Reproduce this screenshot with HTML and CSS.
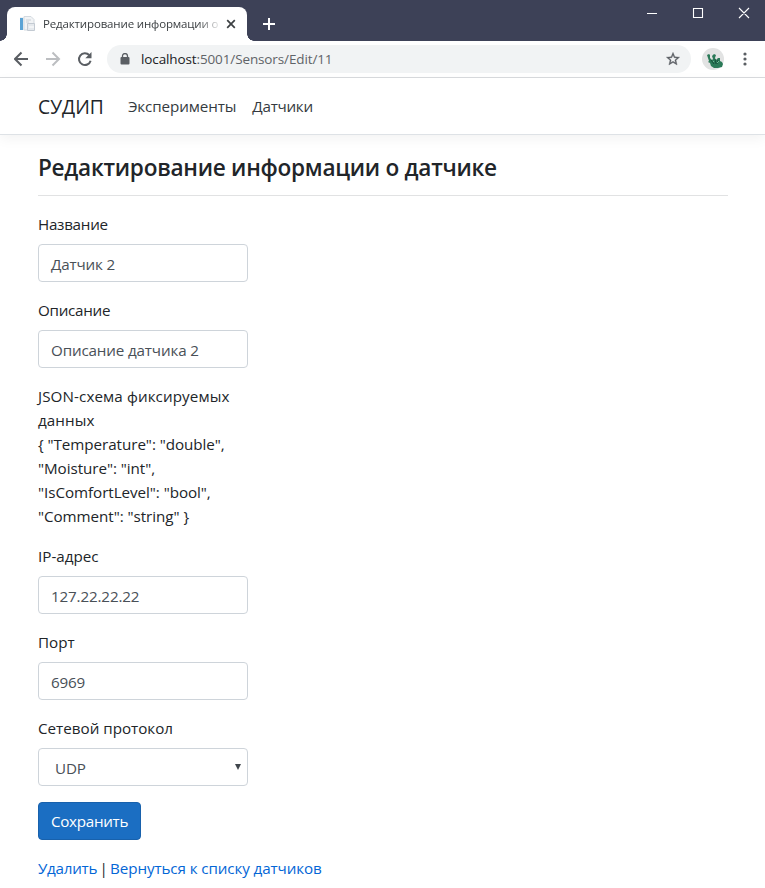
FILE: index.html
```html
<!DOCTYPE html>
<html lang="ru">
<head>
<meta charset="utf-8">
<title>Редактирование информации о датчике</title>
<link rel="stylesheet" href="styles.css">
</head>
<body>
<div class="titlebar">
  <div class="tab">
    <svg class="favicon" width="18" height="18" viewBox="0 0 18 18">
      <path d="M1 2h12v13H1z" fill="#eef1f4"/>
      <path d="M1 3h3v12H1z" fill="#5ba3d5"/>
      <path d="M5 1.500h7l3 3V15H5z" fill="#f1f3f5" stroke="#d3d9df"/>
      <path d="M7 5h5M7 7h3" stroke="#cbd1d8"/>
      <path d="M8.500 8.500h7v7h-7z" fill="#e5e9ed" stroke="#c3cad2"/>
      <path d="M10 12h5" stroke="#fff"/>
    </svg>
    <span class="tab-title">Редактирование информации о</span>
    <svg class="tab-close" width="10" height="10" viewBox="0 0 10 10"><path d="M1.200 1.200l7.600 7.600M8.800 1.200L1.200 8.800" stroke="#3c4043" stroke-width="1.700"/></svg>
  </div>
  <svg class="newtab" width="12" height="12" viewBox="0 0 12 12"><path d="M6 0v12M0 6h12" stroke="#fff" stroke-width="2"/></svg>
  <svg class="window-buttons" width="104" height="12" viewBox="0 0 104 12"><path d="M0 6.500h10M46.500 1.500h9v9h-9zM92 1l10 10M102 1L92 11" fill="none" stroke="#fff" stroke-width="1.100"/></svg>
</div>
<div class="toolbar">
  <svg class="nav-icons" width="80" height="16" viewBox="0 0 80 16" fill="none" stroke-width="2">
    <path d="M14 8H1.500M7.500 1.500L1 8l6.500 6.500" stroke="#5a5e63"/>
    <path d="M32 8h12.500M38.500 1.500L45 8l-6.500 6.500" stroke="#bcbec1"/>
    <path d="M75.300 4.200A5.900 5.900 0 1 0 76.600 9.700" stroke="#5a5e63"/>
    <path d="M77.500 1v6.200h-6.200z" fill="#5a5e63"/>
  </svg>
  <div class="address">
    <svg width="10" height="12" viewBox="0 0 10 12"><rect x="0.500" y="4" width="9" height="7.500" rx="1" fill="#5a5e63"/><path d="M2.500 5V3a2.500 2.500 0 0 1 5 0v2" fill="none" stroke="#5a5e63" stroke-width="1.300"/></svg>
    <span class="url"><b>localhost</b>:5001/Sensors/Edit/11</span>
    <svg class="star" width="16" height="16" viewBox="0 0 24 24"><path d="M22 9.240l-7.190-.62L12 2 9.190 8.630 2 9.240l5.460 4.730L5.820 21 12 17.270 18.180 21l-1.630-7.030L22 9.240zM12 15.400l-3.760 2.270 1-4.280-3.320-2.880 4.380-.38L12 6.100l1.710 4.040 4.380.38-3.320 2.880 1 4.280L12 15.400z" fill="#5a5e63" stroke="#5a5e63" stroke-width=".5"/></svg>
  </div>
  <svg class="avatar" width="22" height="22" viewBox="0 0 22 22">
    <circle cx="11" cy="11" r="11" fill="#e2e3e3"/>
    <path d="M5 7l2-1 1 1v3l2 2 1-1-1-3 2-2 2 1-1 3 1 2 2-2 2 0v3l2 1 1 2-1 3-4 1h-4l-3-2-1-3-2-1 1-1z" fill="#2b7a58"/>
    <path d="M9 12l3 4M13 11l1 5M16 12l-1 4" stroke="#174f3b"/>
    <path d="M11 14l1-1M15 15l2-2" stroke="#71b796"/>
  </svg>
  <svg class="menu" width="4" height="14" viewBox="0 0 4 14" fill="#5a5e63"><circle cx="2" cy="2" r="1.600"/><circle cx="2" cy="7" r="1.600"/><circle cx="2" cy="12" r="1.600"/></svg>
</div>
<header class="navbar">
  <a class="brand">СУДИП</a>
  <a class="nav-link">Эксперименты</a>
  <a class="nav-link tight">Датчики</a>
</header>
<main class="container">
  <h4>Редактирование информации о датчике</h4>
  <hr>
  <form class="form">
    <div class="group"><label class="tight">Название</label><div class="control">Датчик 2</div></div>
    <div class="group"><label class="tight">Описание</label><div class="control">Описание датчика 2</div></div>
    <div class="group schema">
      <div class="schema-title">JSON-схема фиксируемых<br>данных</div>
      <div>{ "Temperature": "double",<br>"Moisture": "int",<br>"IsComfortLevel": "bool",<br>"Comment": "string" }</div>
    </div>
    <div class="group"><label class="wide">IP-адрес</label><div class="control">127.22.22.22</div></div>
    <div class="group"><label class="wide">Порт</label><div class="control">6969</div></div>
    <div class="group"><label class="wide">Сетевой протокол</label><div class="control select"><span>UDP</span><svg width="6" height="6" viewBox="0 0 6 6"><path d="M0 0h6L3 6z" fill="#40464c"/></svg></div></div>
    <div class="group"><button type="button" class="btn">Сохранить</button></div>
  </form>
  <div class="links"><a class="tight">Удалить</a> | <a>Вернуться к списку датчиков</a></div>
</main>
</body>
</html>
```
FILE: styles.css
```css
* { box-sizing: border-box; }
body { margin: 0; background: #fff; color: #212529; font: 400 15.2px/24px "Open Sans", "Noto Sans", sans-serif; letter-spacing: -0.1px; height: 888px; overflow: hidden; }
svg { display: block; flex: none; }
.tight { letter-spacing: -0.27px; }
.wide { letter-spacing: 0; }
.titlebar { display: flex; height: 41px; background: #3d4157; }
.tab { position: relative; display: flex; align-items: center; width: 240px; height: 34px; margin: 7px 0 0 7px; padding: 0 11px 0 12px; background: #fff; border-radius: 8px 8px 0 0; }
.tab::before, .tab::after { content: ""; position: absolute; bottom: 0; width: 7px; height: 7px; }
.tab::before { left: -7px; background: radial-gradient(circle at 0 0, transparent 6.5px, #fff 7px); }
.tab::after { right: -7px; background: radial-gradient(circle at 100% 0, transparent 6.500px, #fff 7px); }
.tab-title { width: 181px; margin-left: 6px; white-space: nowrap; font-size: 11.5px; color: #3c4043; letter-spacing: -0.15px; -webkit-mask-image: linear-gradient(90deg, #000 155px, transparent 179px); mask-image: linear-gradient(90deg, #000 155px, transparent 179px); }
.tab-close { margin-left: auto; }
.newtab { margin: 18px 0 0 16px; }
.window-buttons { margin: 7px 14px 0 auto; }
.toolbar { display: flex; align-items: center; height: 37px; padding: 0 18px 0 14px; border-bottom: 1px solid #d9dbde; }
.address { display: flex; align-items: center; width: 584px; height: 28px; margin-left: 13px; padding: 0 10px 0 13px; border-radius: 14px; background: #f1f3f4; }
.url { margin-left: 11px; font-size: 13.5px; color: #5f6368; letter-spacing: -0.12px; }
.url b { font-weight: 400; color: #202124; }
.star { margin-left: auto; }
.avatar { margin-left: 11px; }
.menu { margin-left: auto; }
.navbar { display: flex; align-items: center; height: 57px; padding: 0 38px; border-bottom: 1px solid #dee2e6; box-shadow: 0 4px 12px rgba(0, 0, 0, .05); }
.brand { margin-right: 24px; padding-top: 1px; font-size: 19.2px; letter-spacing: 0.05px; }
.nav-link { margin-right: 16px; color: #343a40; }
.container { padding: 18px 37px 0 38px; }
h4 { margin: 0 0 12px; font-size: 22.6px; line-height: 30px; font-weight: 600; letter-spacing: -0.27px; }
hr { margin: 0 0 16px; border: 0; border-top: 1px solid #e1e2e3; }
.form { width: 210px; }
.group { margin-bottom: 16px; }
label { display: block; margin-bottom: 8px; padding-top: 1px; line-height: 23px; }
.schema { white-space: nowrap; letter-spacing: -0.05px; }
.schema-title { letter-spacing: 0.1px; }
.control { display: flex; align-items: center; height: 38px; padding: 2px 12px 0; border: 1px solid #ced4da; border-radius: 4px; color: #495057; letter-spacing: -0.15px; }
.select { justify-content: space-between; padding: 2px 6px 0 16px; }
.select svg { margin-top: -3px; }
.btn { display: block; width: 103px; height: 38px; padding: 0 12px; border: 1px solid #1861ac; border-radius: 4px; background: #1b6ec2; color: #fff; font: inherit; letter-spacing: -0.3px; }
.links { word-spacing: -1.5px; }
.links a { color: #0366d6; word-spacing: 0; }
```
